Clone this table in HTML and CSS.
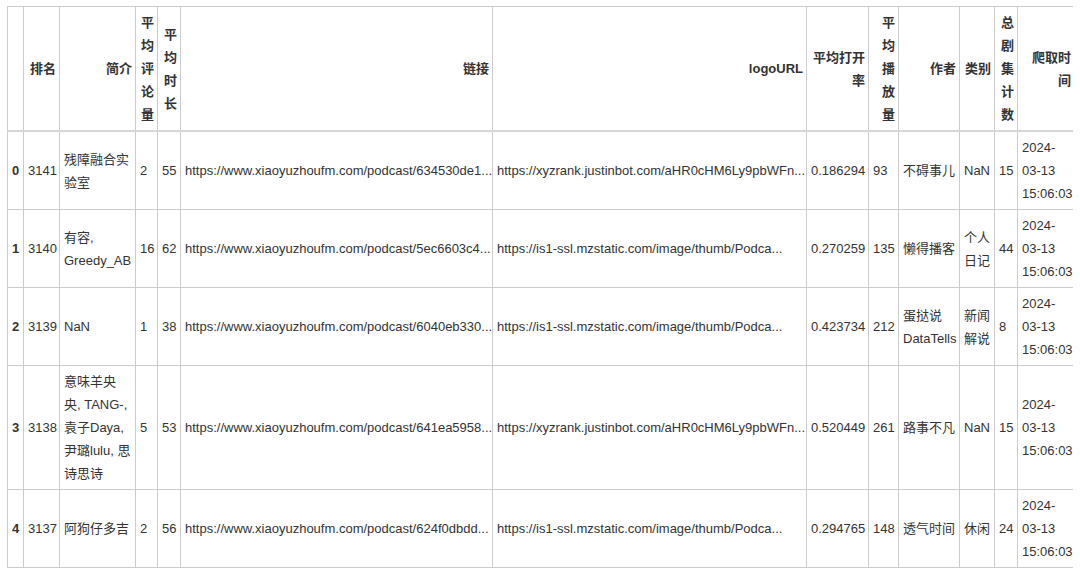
FILE: index.html
```html
<!DOCTYPE html>
<html lang="zh">
<head>
<meta charset="utf-8">
<title>DataFrame</title>
<link rel="stylesheet" href="styles.css">
</head>
<body>
<table class="df">
  <colgroup>
    <col class="c-idx">
    <col class="c-rank">
    <col class="c-intro">
    <col class="c-cmt">
    <col class="c-dur">
    <col class="c-link">
    <col class="c-logo">
    <col class="c-open">
    <col class="c-play">
    <col class="c-author">
    <col class="c-cat">
    <col class="c-eps">
    <col class="c-time">
  </colgroup>
  <thead>
    <tr>
      <th></th>
      <th>排名</th>
      <th>简介</th>
      <th>平均评论量</th>
      <th>平均时长</th>
      <th>链接</th>
      <th>logoURL</th>
      <th>平均打开率</th>
      <th>平均播放量</th>
      <th>作者</th>
      <th>类别</th>
      <th>总剧集计数</th>
      <th>爬取时间</th>
    </tr>
  </thead>
  <tbody>
    <tr class="r3">
      <th>0</th>
      <td>3141</td>
      <td>残障融合实验室</td>
      <td>2</td>
      <td>55</td>
      <td>https://www.xiaoyuzhoufm.com/podcast/634530de1...</td>
      <td>https://xyzrank.justinbot.com/aHR0cHM6Ly9pbWFn...</td>
      <td>0.186294</td>
      <td>93</td>
      <td>不碍事儿</td>
      <td>NaN</td>
      <td>15</td>
      <td>2024-03-13 15:06:03</td>
    </tr>
    <tr class="r3">
      <th>1</th>
      <td>3140</td>
      <td>有容, Greedy_AB</td>
      <td>16</td>
      <td>62</td>
      <td>https://www.xiaoyuzhoufm.com/podcast/5ec6603c4...</td>
      <td>https://is1-ssl.mzstatic.com/image/thumb/Podca...</td>
      <td>0.270259</td>
      <td>135</td>
      <td>懒得播客</td>
      <td>个人日记</td>
      <td>44</td>
      <td>2024-03-13 15:06:03</td>
    </tr>
    <tr class="r3">
      <th>2</th>
      <td>3139</td>
      <td>NaN</td>
      <td>1</td>
      <td>38</td>
      <td>https://www.xiaoyuzhoufm.com/podcast/6040eb330...</td>
      <td>https://is1-ssl.mzstatic.com/image/thumb/Podca...</td>
      <td>0.423734</td>
      <td>212</td>
      <td>蛋挞说 DataTells</td>
      <td>新闻解说</td>
      <td>8</td>
      <td>2024-03-13 15:06:03</td>
    </tr>
    <tr>
      <th>3</th>
      <td>3138</td>
      <td>意味羊央央, TANG-, 袁子Daya, 尹璐lulu, 思诗思诗</td>
      <td>5</td>
      <td>53</td>
      <td>https://www.xiaoyuzhoufm.com/podcast/641ea5958...</td>
      <td>https://xyzrank.justinbot.com/aHR0cHM6Ly9pbWFn...</td>
      <td>0.520449</td>
      <td>261</td>
      <td>路事不凡</td>
      <td>NaN</td>
      <td>15</td>
      <td>2024-03-13 15:06:03</td>
    </tr>
    <tr class="r3">
      <th>4</th>
      <td>3137</td>
      <td>阿狗仔多吉</td>
      <td>2</td>
      <td>56</td>
      <td>https://www.xiaoyuzhoufm.com/podcast/624f0dbdd...</td>
      <td>https://is1-ssl.mzstatic.com/image/thumb/Podca...</td>
      <td>0.294765</td>
      <td>148</td>
      <td>透气时间</td>
      <td>休闲</td>
      <td>24</td>
      <td>2024-03-13 15:06:03</td>
    </tr>
  </tbody>
</table>
</body>
</html>
```

FILE: styles.css
```css
html, body {
  background: #ffffff;
}

body {
  margin: 6px 7px;
  font-family: "Liberation Sans", Arial, "Noto Sans CJK SC", sans-serif;
  font-size: 13px;
  line-height: 23px;
  color: #333333;
}

.df {
  border-collapse: collapse;
  table-layout: fixed;
  width: 1067px;
  border: 1px solid #cccccc;
}

.df th,
.df td {
  border: 1px solid #cccccc;
  padding: 4px 3px 4px 4px;
  vertical-align: middle;
}

.df thead th {
  font-weight: bold;
  text-align: right;
  border-bottom: 2px solid #d6d6d6;
}

.df tbody th {
  font-weight: bold;
  text-align: left;
}

.df td {
  text-align: left;
}

.df tbody tr.r3 th,
.df tbody tr.r3 td {
  height: 69px;
}

.c-idx { width: 16px; }
.c-rank { width: 36px; }
.c-intro { width: 76px; }
.c-cmt { width: 22px; }
.c-dur { width: 23px; }
.c-link { width: 312px; }
.c-logo { width: 314px; }
.c-open { width: 62px; }
.c-play { width: 30px; }
.c-author { width: 61px; }
.c-cat { width: 35px; }
.c-eps { width: 23px; }
.c-time { width: 57px; }
```
